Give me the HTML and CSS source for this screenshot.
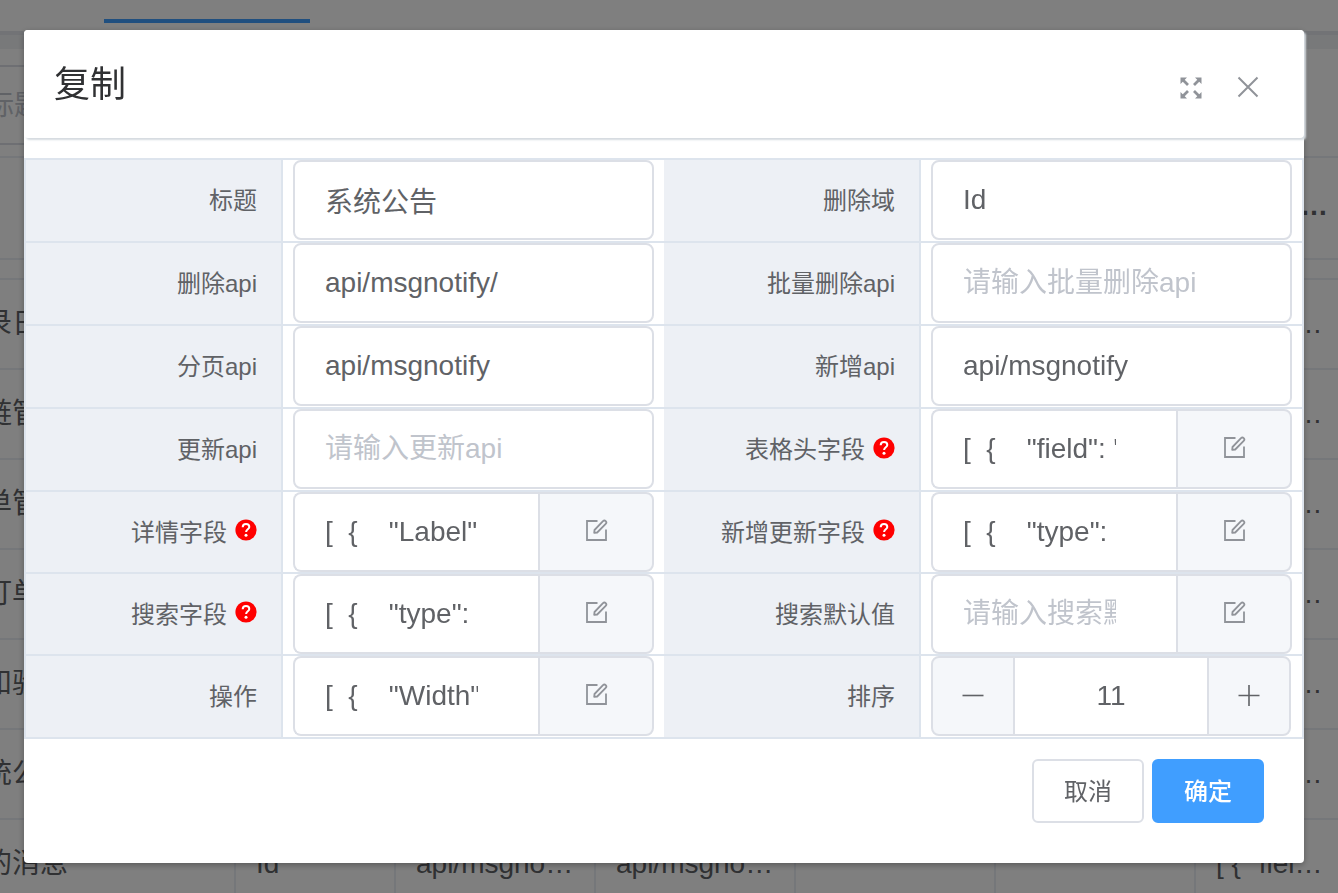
FILE: index.html
```html
<!DOCTYPE html>
<html lang="zh-CN">
<head>
<meta charset="utf-8">
<title>复制</title>
<link rel="stylesheet" href="styles.css">
</head>
<body>
<svg class="sprite" aria-hidden="true">
  <symbol id="i-edit" viewBox="0 0 24 24">
    <path d="M13.500 3H3v19h19V11.500" fill="none" stroke="currentColor" stroke-width="1.800"/>
    <path d="M10.500 12 19 3.200a1.900 1.900 0 0 1 2.700 2.700L13.200 14.500 10.200 14.900Z" fill="none" stroke="currentColor" stroke-width="1.800" stroke-linejoin="round"/>
  </symbol>
  <symbol id="i-help" viewBox="0 0 22 22">
    <circle cx="11" cy="11" r="10.600" fill="#f00"/>
    <path d="M7.700 8.300c0-2 1.400-3.300 3.300-3.300s3.300 1.200 3.300 3c0 2.300-3.200 2.400-3.200 5" fill="none" stroke="#fff" stroke-width="2"/>
    <circle cx="11" cy="16.200" r="1.500" fill="#fff"/>
  </symbol>
</svg>

<div class="page">
  <div class="tabs"><span class="tab-line"></span></div>
  <div class="band"></div>
  <div class="search"><span class="search-text">标题</span></div>
  <div class="tools"><span>…</span></div>
  <div class="list">
    <div class="row"><span>录日</span><span class="last">[ { "fiel…</span></div>
    <div class="row"><span>链管</span><span class="last">[ { "fiel…</span></div>
    <div class="row"><span>单管</span><span class="last">[ { "fiel…</span></div>
    <div class="row"><span>订单</span><span class="last">[ { "fiel…</span></div>
    <div class="row"><span>和验</span><span class="last">[ { "fiel…</span></div>
    <div class="row"><span>统公</span><span class="last">[ { "fiel…</span></div>
    <div class="row"><span>的消息</span><span>Id</span><span>api/msgno…</span><span>api/msgno…</span><span></span><span></span><span class="last">[ { "fiel…</span></div>
  </div>
</div>

<div class="mask">
  <section class="dialog" role="dialog" aria-labelledby="dialog-title">
    <header class="head">
      <h1 class="title" id="dialog-title">复制</h1>
      <button class="icon-btn" type="button" aria-label="全屏">
        <svg width="24" height="24" viewBox="0 0 24 24">
          <path d="M4 5l5 5M20 5l-5 5M4 21l5-5M20 21l-5-5" stroke="currentColor" stroke-width="2.800"/>
          <path d="M1.500 2.500H8L1.500 9ZM22.500 2.500V9L16 2.500ZM1.500 23.500V17L8 23.500ZM22.500 23.500H16L22.500 17Z" fill="currentColor"/>
        </svg>
      </button>
      <button class="icon-btn" type="button" aria-label="关闭">
        <svg width="24" height="24" viewBox="0 0 24 24">
          <path d="M2.500 2.500l19 19M21.500 2.500l-19 19" stroke="currentColor" stroke-width="2"/>
        </svg>
      </button>
    </header>

    <form class="form">
      <label class="label" for="f1">标题</label>
      <div class="field"><input class="input" id="f1" value="系统公告"></div>
      <label class="label" for="f2">删除域</label>
      <div class="field"><input class="input" id="f2" value="Id"></div>

      <label class="label" for="f3">删除api</label>
      <div class="field"><input class="input" id="f3" value="api/msgnotify/"></div>
      <label class="label" for="f4">批量删除api</label>
      <div class="field"><input class="input" id="f4" placeholder="请输入批量删除api"></div>

      <label class="label" for="f5">分页api</label>
      <div class="field"><input class="input" id="f5" value="api/msgnotify"></div>
      <label class="label" for="f6">新增api</label>
      <div class="field"><input class="input" id="f6" value="api/msgnotify"></div>

      <label class="label" for="f7">更新api</label>
      <div class="field"><input class="input" id="f7" placeholder="请输入更新api"></div>
      <label class="label" for="f8">表格头字段<svg class="help"><use href="#i-help"/></svg></label>
      <div class="field"><div class="group"><input class="input" id="f8" value='[  {    "field": "'><button class="append" type="button" aria-label="编辑"><svg class="edit"><use href="#i-edit"/></svg></button></div></div>

      <label class="label" for="f9">详情字段<svg class="help"><use href="#i-help"/></svg></label>
      <div class="field tight"><div class="group"><input class="input" id="f9" value='[  {    "Label"'><button class="append" type="button" aria-label="编辑"><svg class="edit"><use href="#i-edit"/></svg></button></div></div>
      <label class="label" for="f10">新增更新字段<svg class="help"><use href="#i-help"/></svg></label>
      <div class="field tight"><div class="group"><input class="input" id="f10" value='[  {    "type":'><button class="append" type="button" aria-label="编辑"><svg class="edit"><use href="#i-edit"/></svg></button></div></div>

      <label class="label" for="f11">搜索字段<svg class="help"><use href="#i-help"/></svg></label>
      <div class="field tight"><div class="group"><input class="input" id="f11" value='[  {    "type":'><button class="append" type="button" aria-label="编辑"><svg class="edit"><use href="#i-edit"/></svg></button></div></div>
      <label class="label" for="f12">搜索默认值</label>
      <div class="field tight"><div class="group"><input class="input" id="f12" placeholder="请输入搜索默认值"><button class="append" type="button" aria-label="编辑"><svg class="edit"><use href="#i-edit"/></svg></button></div></div>

      <label class="label" for="f13">操作</label>
      <div class="field"><div class="group"><input class="input" id="f13" value='[  {    "Width"'><button class="append" type="button" aria-label="编辑"><svg class="edit"><use href="#i-edit"/></svg></button></div></div>
      <label class="label" for="f14">排序</label>
      <div class="field"><div class="group stepper">
        <button class="step" type="button" aria-label="减少"><svg width="24" height="24" viewBox="0 0 24 24"><path d="M1.500 11.500h21" stroke="currentColor" stroke-width="1.600"/></svg></button>
        <input class="input" id="f14" value="11" inputmode="numeric">
        <button class="step" type="button" aria-label="增加"><svg width="24" height="24" viewBox="0 0 24 24"><path d="M1.500 11.500h21M12 1v21" stroke="currentColor" stroke-width="1.600"/></svg></button>
      </div></div>
    </form>

    <footer class="foot">
      <button class="btn" type="button">取消</button>
      <button class="btn primary" type="button">确定</button>
    </footer>
  </section>
</div>
</body>
</html>
```
FILE: styles.css
```css
* {
  box-sizing: border-box;
}

html,
body {
  height: 100%;
  margin: 0;
  overflow: hidden;
}

body,
button,
input {
  font-family: "Liberation Sans", "Noto Sans CJK SC", sans-serif;
  color: #606266;
}

.sprite {
  position: absolute;
  width: 0;
  height: 0;
}

/* Page under the dialog */
.page {
  height: 100%;
  overflow: hidden;
  background: #fff;
  font-size: 28px;
}

.tabs {
  display: flex;
  align-items: flex-end;
  height: 35px;
  padding: 0 104px 8px;
  border-bottom: 4px solid #e4e7ed;
}

.tab-line {
  width: 206px;
  height: 4px;
  background: #409eff;
}

.band {
  height: 14px;
  background: #f0f2f5;
}

.search {
  display: flex;
  align-items: center;
  width: 400px;
  height: 80px;
  margin: 16px 0 11px -36px;
  padding: 0 0 4px 20px;
  border: 2px solid #dcdfe6;
}

.search-text {
  color: #c0c4cc;
}

.tools {
  display: flex;
  justify-content: flex-end;
  align-items: center;
  height: 104px;
  margin-bottom: 18px;
  padding: 0 10px 4px 0;
  border: solid #ebeef5;
  border-width: 2px 0;
  font-weight: 700;
}

.list {
  margin-left: -36px;
  border-top: 2px solid #ebeef5;
}

.row {
  display: grid;
  grid-template-columns: 272px 160px repeat(4, 200px) 1fr;
  height: 90px;
  border-bottom: 2px solid #ebeef5;
}

.row span {
  padding: 0 20px;
  border-right: 2px solid #ebeef5;
  line-height: 88px;
  white-space: nowrap;
}

.row .last {
  grid-column: 7;
  padding-right: 0;
  border-right: 0;
}

/* Dialog */
.mask {
  position: fixed;
  inset: 0;
  padding: 30px 34px 30px 24px;
  background: rgba(0, 0, 0, 0.5);
}

.dialog {
  background: #fff;
  border-radius: 4px;
  box-shadow: 0 2px 6px rgba(0, 0, 0, 0.3);
}

.head {
  display: flex;
  align-items: center;
  gap: 33px;
  height: 108px;
  padding: 6px 44px 0 30px;
  border-radius: 4px;
  background: #fff;
  box-shadow: 2px 2px 2px #d5dbe0;
}

.title {
  flex: 1;
  margin: 0;
  padding-bottom: 12px;
  color: #303133;
  font-size: 36px;
  font-weight: 400;
}

.icon-btn {
  display: flex;
  padding: 0;
  border: 0;
  background: none;
  color: #909399;
}

.form {
  display: grid;
  grid-template-columns: 257px 1fr 257px 1fr;
  margin-top: 20px;
  border: solid #dde4ed;
  border-width: 2px 2px 0;
}

.label,
.field {
  border-bottom: 2px solid #dde4ed;
}

.label {
  display: flex;
  align-items: center;
  justify-content: flex-end;
  gap: 8px;
  padding: 0 24px 4px 0;
  border-right: 2px solid #dde4ed;
  background: #edf0f5;
  font-size: 24px;
  white-space: nowrap;
}

.field {
  min-width: 0;
  padding: 0 10px 1px;
}

.field.tight {
  padding-bottom: 0;
}

.help {
  width: 22px;
  height: 22px;
}

.input {
  display: block;
  width: 100%;
  min-width: 0;
  height: 80px;
  padding: 0 30px;
  border: 2px solid #dcdfe6;
  border-radius: 8px;
  outline: 0;
  background: #fff;
  font-size: 28px;
}

.input::placeholder {
  color: #c0c4cc;
}

.group {
  display: flex;
}

.group .input {
  flex: 1;
  padding-right: 60px;
  border-right: 0;
  border-radius: 8px 0 0 8px;
}

.append,
.step {
  display: flex;
  align-items: center;
  justify-content: center;
  height: 80px;
  padding: 0;
  border: 2px solid #dcdfe6;
  background: #f5f7fa;
}

.append {
  width: 116px;
  padding-bottom: 4px;
  border-radius: 0 8px 8px 0;
  color: #909399;
}

.edit {
  width: 24px;
  height: 24px;
}

.stepper {
  padding-right: 1px;
}

.step {
  width: 84px;
  border-radius: 8px 0 0 8px;
}

.step:last-child {
  border-radius: 0 8px 8px 0;
}

.stepper .input {
  padding: 0;
  border-width: 2px 0;
  border-radius: 0;
  text-align: center;
}

.foot {
  display: flex;
  justify-content: flex-end;
  gap: 8px;
  padding: 20px 40px 40px;
}

.btn {
  width: 112px;
  height: 64px;
  padding: 0 0 4px;
  border: 2px solid #dcdfe6;
  border-radius: 6px;
  background: #fff;
  font-size: 24px;
}

.btn.primary {
  border-color: #409eff;
  background: #409eff;
  color: #fff;
  font-weight: 500;
}
```
